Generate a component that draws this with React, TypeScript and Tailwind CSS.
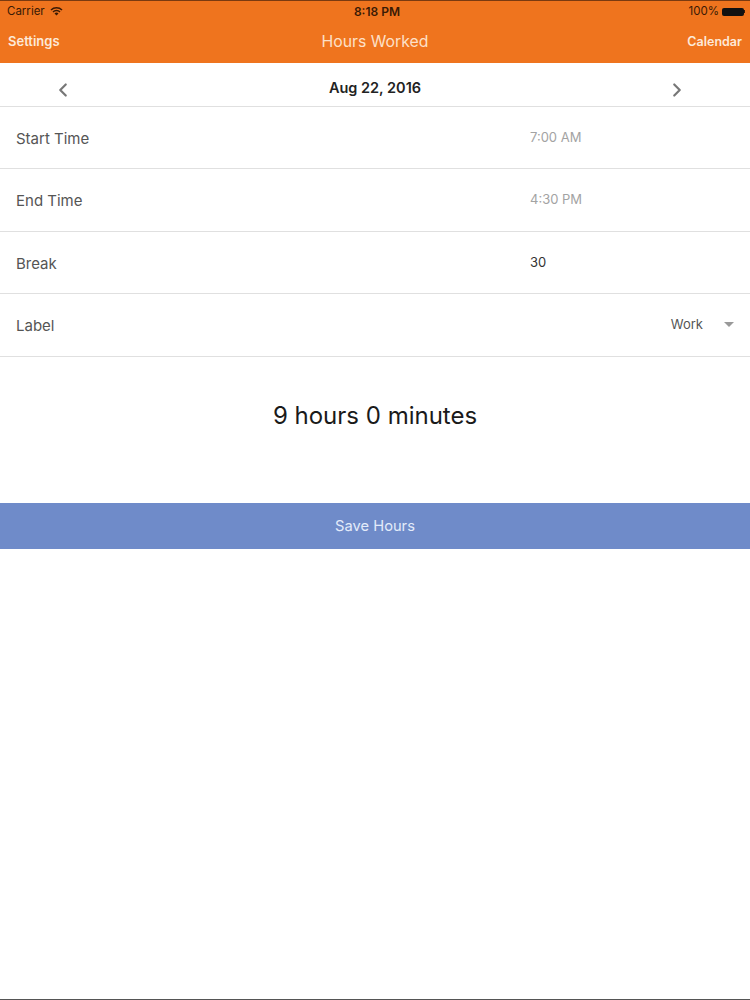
import { ChevronLeft, ChevronRight } from 'lucide-react';

const rows = [
  { label: 'Start Time', value: '7:00 AM', tone: 'text-[#a3a3a3]' },
  { label: 'End Time', value: '4:30 PM', tone: 'text-[#a3a3a3]' },
  { label: 'Break', value: '30', tone: 'text-[#333333]' },
];

function Row({ label, children }: { label: string; children: React.ReactNode }) {
  return (
    <div className="flex h-[62.4px] items-center border-b border-[#e0e0e0] pl-4">
      <span className="mt-[3px] text-[15px] text-[#555555]">{label}</span>
      {children}
    </div>
  );
}

export default function App() {
  return (
    <div className="flex h-[1000px] w-[750px] flex-col overflow-hidden border-b border-[#555555] bg-white font-['Inter',sans-serif]">
      {/* Status bar + nav */}
      <div className="h-[63px] border-t border-[#7a3a10] bg-[#ef741e] px-2">
        <div className="relative flex h-[20px] items-center justify-between pt-[1px] text-[12px] text-[#3a1a05]">
          <div className="-ml-[1px] flex items-center gap-[5px]">
            <span className="text-[11.5px]">Carrier</span>
            <svg width="13" height="10" viewBox="0 0 13 10" className="mb-[2px]">
              <path d="M0.5 3.4a8.5 8.5 0 0 1 12 0l-1 1.1a7 7 0 0 0-10 0z" fill="#3a1a05" />
              <path d="M2.5 5.5a5.6 5.6 0 0 1 8 0l-1 1.1a4.2 4.2 0 0 0-6 0z" fill="#3a1a05" />
              <path d="M4.5 7.5a2.8 2.8 0 0 1 4 0L6.5 9.6z" fill="#3a1a05" />
            </svg>
          </div>
          <span className="absolute left-[4px] right-0 text-center text-[12px] font-semibold">8:18 PM</span>
          <div className="-mr-[3px] flex items-center gap-[3px]">
            <span className="text-[11.5px]">100%</span>
            <div className="flex items-center">
              <div className="h-[8px] w-[22px] rounded-[2px] bg-[#111111]" />
              <div className="h-[3px] w-[1px] bg-[#3a1a05]" />
            </div>
          </div>
        </div>
        <div className="relative flex h-[41px] items-center justify-between pt-[1px] text-white">
          <span className="text-[13px] font-semibold text-[#fde9d8]">Settings</span>
          <span className="absolute left-0 right-0 text-center text-[15.8px] text-[#fde0c8]">Hours Worked</span>
          <span className="text-[12.5px] font-semibold text-[#fde9d8]">Calendar</span>
        </div>
      </div>

      {/* Date switcher */}
      <div className="grid h-[44px] grid-cols-3 items-center border-b border-[#e0e0e0] pt-[6px]">
        <ChevronLeft className="ml-[52px] mt-[5px] h-[22px] w-[22px] text-[#777777]" strokeWidth={2.4} />
        <span className="text-center text-[14.5px] font-semibold text-[#222222]">Aug 22, 2016</span>
        <ChevronRight className="ml-[166px] mt-[5px] h-[22px] w-[22px] text-[#777777]" strokeWidth={2.4} />
      </div>

      {rows.map((row) => (
        <Row key={row.label} label={row.label}>
          <span className={`ml-auto w-[220px] text-[13px] ${row.tone}`}>{row.value}</span>
        </Row>
      ))}
      <Row label="Label">
        <span className="ml-auto text-[13px] text-[#555555]">Work</span>
        <div className="ml-[21px] mr-[16px] h-0 w-0 border-x-[5px] border-t-[5px] border-x-transparent border-t-[#999999]" />
      </Row>

      <div className="flex h-[146.4px] justify-center pt-[41px]">
        <span className="text-[24px] leading-[36px] text-[#1a1a1a]">9 hours 0 minutes</span>
      </div>

      <div className="flex h-[46px] items-center justify-center bg-[#6f8bc9] pt-[1px] text-[14.7px] text-[#e3ebfa]">
        Save Hours
      </div>
    </div>
  );
}
